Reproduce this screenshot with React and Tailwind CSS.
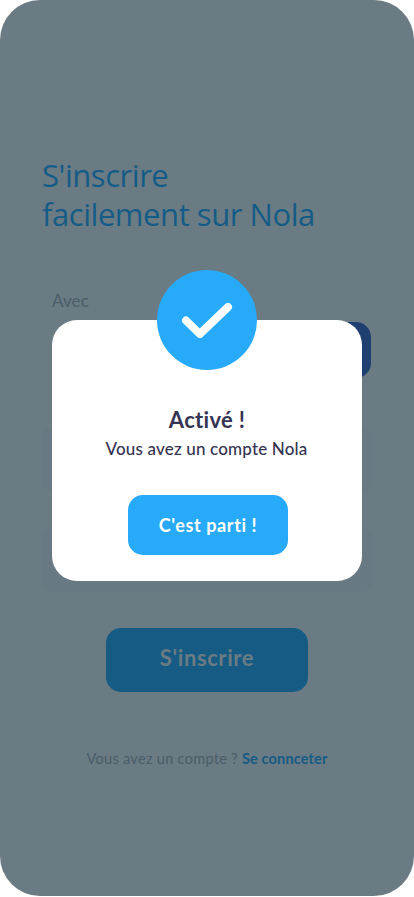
import React from "react";

function SignupScreen() {
  return (
    <div className="flex flex-col h-full px-[42px] pt-[156px]">
      <h1 className="h-[78px] font-['Open_Sans'] font-normal text-[31px] leading-[39px] tracking-[-0.45px] text-[#155b87] whitespace-nowrap">
        S'inscrire
        <br />
        facilement sur Nola
      </h1>

      <p className="mt-[57px] ml-[10px] h-5 text-[17px] leading-5 tracking-[0.1px] text-[#4a5d69]">Avec</p>

      <div className="mt-[11px] flex justify-end">
        <div className="h-14 w-[155px] rounded-[15px] bg-[#1f3f70] mr-px" />
      </div>

      <div className="mt-[49px] h-16 rounded-[10px] bg-[#687984]" />
      <div className="mt-[37px] h-16 rounded-[10px] bg-[#687984]" />

      <button className="mt-[36px] mx-auto h-16 w-[202px] pb-1.5 rounded-[15px] bg-[#155b83] text-[22px] font-bold tracking-[0.6px] text-[#6b7b83]">
        S'inscrire
      </button>

      <p className="mt-[57px] text-center text-[14.5px] leading-5 tracking-[0.3px] text-[#4a5d69] whitespace-nowrap">
        Vous avez un compte ? <a className="font-bold tracking-[0.15px] text-[#155b83]">Se connceter</a>
      </p>
    </div>
  );
}

function SuccessModal() {
  return (
    <div className="absolute left-[52px] top-[320px] flex h-[261px] w-[310px] flex-col items-center rounded-[25px] bg-white text-[#353452]">
      <div className="-mt-[50px] flex h-[100px] w-[100px] shrink-0 items-center justify-center rounded-full bg-[#28aafa]">
        <svg width="52" height="38" viewBox="0 0 52 38" fill="none">
          <path
            d="M5 19.5 L18.8 33 L47 6"
            stroke="white"
            strokeWidth="8"
            strokeLinecap="round"
            strokeLinejoin="round"
          />
        </svg>
      </div>
      <h2 className="mt-[35px] text-[22px] leading-[30px] font-bold tracking-[0.3px]">Activé !</h2>
      <p className="mt-[4px] -ml-px text-[17px] leading-5 font-medium tracking-[0.17px] whitespace-nowrap">
        Vous avez un compte Nola
      </p>
      <button className="mt-[36px] ml-[2px] h-[60px] w-40 rounded-[15px] bg-[#28aafa] text-lg font-bold tracking-[0.6px] text-white">
        C'est parti !
      </button>
    </div>
  );
}

export default function App() {
  return (
    <div className="h-[897px] w-[414px] overflow-hidden bg-white font-[Lato,sans-serif]">
      <div className="relative h-[896px] w-full rounded-[40px] bg-[#6a7b83]">
        <SignupScreen />
        <SuccessModal />
      </div>
    </div>
  );
}
